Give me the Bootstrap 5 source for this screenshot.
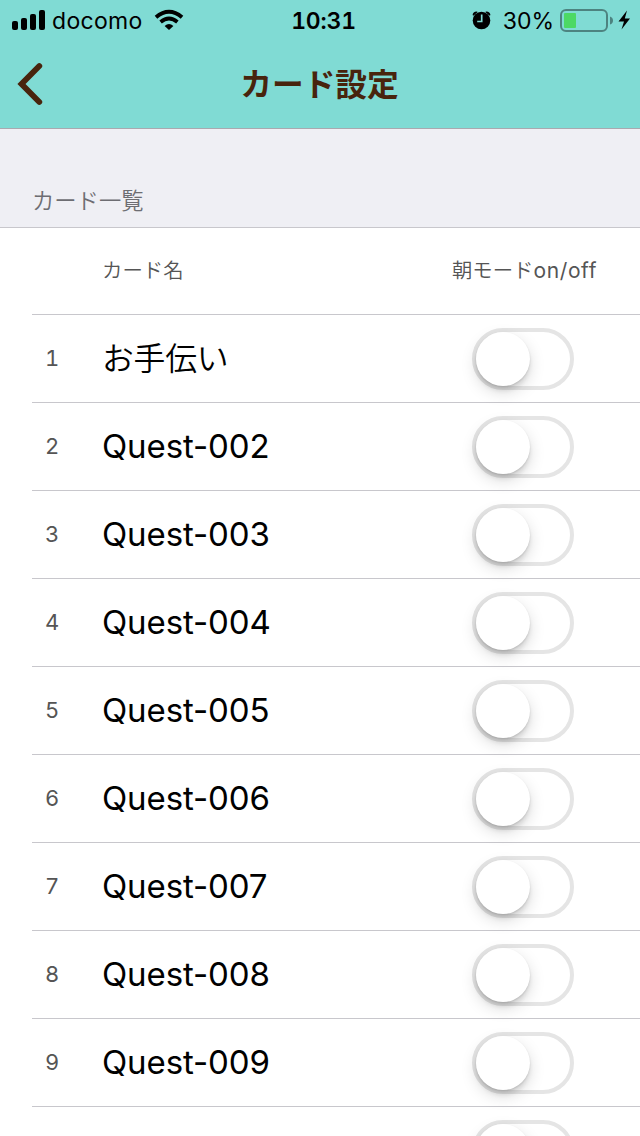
<!DOCTYPE html>
<html lang="ja">
<head>
<meta charset="utf-8">
<meta name="viewport" content="width=device-width, initial-scale=1">
<title>カード設定</title>
<link href="https://cdn.jsdelivr.net/npm/bootstrap@5.3.0/dist/css/bootstrap.min.css" rel="stylesheet">
<style>
  body { font-family: Inter, "Noto Sans CJK JP", sans-serif; background: #fff; color: #000; }
  .screen { height: 1136px; }
  .top-area { background: #80dbd4; height: 129px; border-bottom: 1px solid #a9a9b0; }
  .status-bar { height: 40px; font-size: 23px; line-height: 43px; }
  .status-side { width: 240px; }
  .signal { margin-left: 12px; }
  .carrier { letter-spacing: .3px; margin-left: 6px; }
  .clock { font-weight: 600; letter-spacing: -.2px; font-variant-numeric: tabular-nums; padding-left: 7px; }
  .battery-text { letter-spacing: 0; }
  .battery { margin-left: 6px; }
  .title-bar { height: 88px; color: #48240d; }
  .title-side { width: 100px; }
  .page-title { font-size: 31.7px; font-weight: 700; line-height: 89px; padding-right: 1px; }
  .section-label { height: 99px; background: #efeff4; border-bottom: 1px solid #c8c7cc; color: #6d6d72; font-size: 22.3px; font-weight: 350; line-height: 32px; padding: 0 0 10px 32px; }
  .cell { height: 88px; margin-left: 32px; border-bottom: 1px solid #c8c7cc; }
  .cell-head { height: 87px; color: #555; font-size: 20.4px; font-weight: 350; }
  .head-name { margin-left: 70px; }
  .head-mode { margin-right: 43px; }
  .mode-latin { font-weight: 400; font-size: 21px; letter-spacing: .6px; }
  .num { width: 70px; padding-left: 13px; font-size: 22px; color: #555; font-variant-numeric: tabular-nums; }
  .card-name { font-size: 33px; letter-spacing: -.12px; line-height: 44px; padding-bottom: 2px; }
  .card-name.ja { font-size: 31.8px; letter-spacing: -.2px; font-weight: 350; padding-bottom: 0; }
  .toggle { width: 102px; height: 62px; border: 4px solid #e5e5e5; border-radius: 31px; margin-right: 66px; }
  .knob { width: 54px; height: 54px; background: #fff; box-shadow: 0 6px 16px rgba(0,0,0,.15), 0 5px 4px rgba(0,0,0,.08), 0 1px 2px rgba(0,0,0,.12); }
</style>
</head>
<body>
<div class="screen overflow-hidden">
<header class="top-area">
  <div class="status-bar d-flex justify-content-between">
    <div class="status-side d-flex">
      <svg class="signal" width="34" height="40"><rect y="21" width="6" height="9" rx="2"/><rect x="9" y="18" width="6" height="12" rx="2"/><rect x="18" y="14" width="6" height="16" rx="2"/><rect x="27" y="10" width="6" height="20" rx="2"/></svg>
      <span class="carrier">docomo</span>
      <svg class="ms-2" width="34" height="40" viewBox="151 0 34 40" fill="none" stroke="#000"><path d="M156 17.2Q169 6.4 182 17.2" stroke-width="4"/><path d="M160.6 22Q169 15 177.4 22" stroke-width="3.8"/><path d="M164.6 26Q169 22.2 173.4 26L169 30Z" fill="#000" stroke="none"/></svg>
    </div>
    <div class="clock text-center">10:31</div>
    <div class="status-side d-flex justify-content-end">
      <svg width="24" height="40" viewBox="470 0 24 40" class="me-2"><circle cx="480.5" cy="20.5" r="8.8"/><path d="M471.6 15Q472 11.7 475.6 11.5L476.8 12.1L472.3 15.8ZM489.4 15Q489 11.7 485.4 11.5L484.2 12.1L488.7 15.8Z"/><path d="M480.7 14.5V21.5H476.2" fill="none" stroke="#80dbd4" stroke-width="1.7"/></svg>
      <span class="battery-text">30%</span>
      <svg class="battery" width="80" height="40" viewBox="560 0 80 40"><rect x="561" y="10" width="46" height="21" rx="5" fill="none" stroke="#4d8380" stroke-width="2"/><rect x="564" y="13" width="12" height="15" rx="1" fill="#4cd964"/><path d="M610 16.5Q613 17.5 613 20.5T610 24.5Z" fill="#4d8380"/><path d="M627 10.5L618.5 21.5H624L621.5 29.5L630 18.5H624.8Z"/></svg>
    </div>
  </div>
  <nav class="title-bar d-flex justify-content-between" aria-label="ナビゲーション">
    <div class="title-side"><svg width="60" height="88" fill="none" stroke="#48240d" stroke-width="5.8" stroke-linecap="round" stroke-linejoin="miter"><path d="M39.3 26L21.5 44L39.3 62"/></svg></div>
    <h1 class="page-title m-0">カード設定</h1>
    <div class="title-side"></div>
  </nav>
</header>
<main>
  <h2 class="section-label m-0 d-flex align-items-end">カード一覧</h2>
  <div class="cell cell-head d-flex align-items-center">
    <span class="head-name">カード名</span><span class="head-mode ms-auto">朝モード<span class="mode-latin">on/off</span></span>
  </div>
  <div id="cards"></div>
</main>
</div>
<script>
  const names = ['お手伝い', ...Array.from({length: 8}, (_, i) => 'Quest-' + String(i + 2).padStart(3, '0')), ''];
  document.getElementById('cards').innerHTML = names.map((name, i) => `
    <div class="cell d-flex align-items-center">
      <span class="num flex-shrink-0">${name && i + 1}</span>
      <span class="card-name${i ? '' : ' ja'}">${name}</span>
      <div class="toggle ms-auto flex-shrink-0" role="switch" aria-checked="false"><div class="knob rounded-circle"></div></div>
    </div>`).join('');
</script>
<script src="https://cdn.jsdelivr.net/npm/bootstrap@5.3.0/dist/js/bootstrap.bundle.min.js"></script>
</body>
</html>
